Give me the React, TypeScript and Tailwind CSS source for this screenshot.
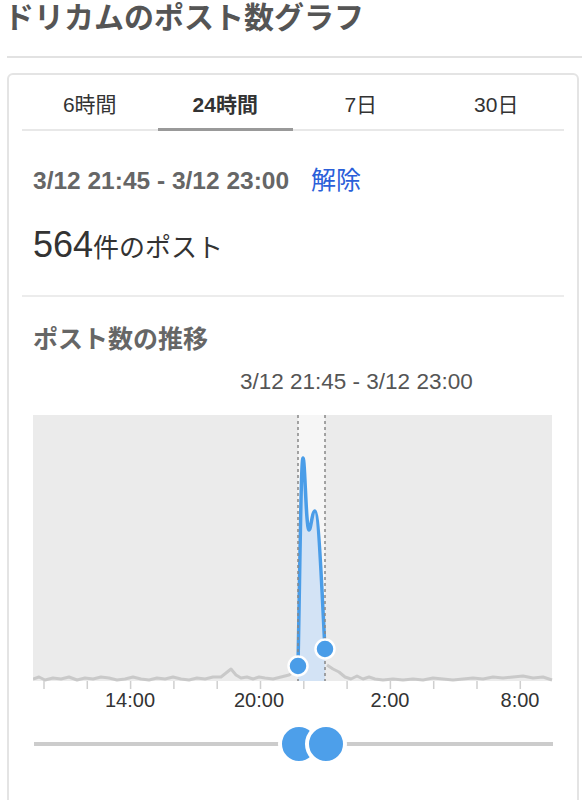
import React from "react";

const tabs = ["6時間", "24時間", "7日", "30日"];

// wiggly grey line, split around the selected range
const greyLeft: [number, number][] = [
  [0, 264], [6, 262], [12, 265], [20, 263], [28, 264], [36, 262], [44, 265],
  [52, 263], [60, 264], [68, 262], [76, 263], [84, 265], [92, 264], [100, 262],
  [108, 264], [116, 265], [124, 263], [132, 264], [140, 262], [148, 264],
  [156, 265], [164, 263], [172, 264], [180, 262], [188, 262], [193, 258],
  [198, 254], [203, 260], [208, 263], [214, 262], [220, 264], [226, 262],
  [232, 263], [240, 264], [248, 262], [256, 260], [262, 256], [265, 251],
];
const greyRight: [number, number][] = [
  [294, 250], [300, 254], [306, 257], [312, 262], [318, 264], [324, 261],
  [330, 264], [336, 262], [342, 264], [350, 265], [360, 264], [370, 265],
  [380, 264], [390, 265], [400, 263], [410, 264], [420, 265], [430, 264],
  [440, 263], [450, 264], [460, 262], [470, 263], [480, 262], [490, 261],
  [500, 263], [510, 262], [519, 265],
];

const toPoints = (pts: [number, number][]) => pts.map((p) => p.join(",")).join(" ");

const ticks = Array.from({ length: 12 }, (_, i) => 11 + i * 43.3);

const labels = [
  { x: 97, text: "14:00" },
  { x: 226, text: "20:00" },
  { x: 357, text: "2:00" },
  { x: 487, text: "8:00" },
];

const peak =
  "M265 251 C267 150 268 43 270 43 C272 43 273 115 276 115 C278 115 279 96 282 96 C286 96 290 200 292 234";

function PostChart() {
  return (
    <svg width="520" height="300" viewBox="0 0 520 300" className="ml-[11px] block">
      <rect x="0" y="0" width="519" height="266" fill="#ebebeb" />
      <rect x="265" y="0" width="27" height="266" fill="#f6f6f6" />
      <polyline points={toPoints(greyLeft)} fill="none" stroke="#c9c9c9" strokeWidth="3" strokeLinejoin="round" />
      <polyline points={toPoints(greyRight)} fill="none" stroke="#c9c9c9" strokeWidth="3" strokeLinejoin="round" />
      <path d={`${peak} L292 266 L265 266 Z`} fill="#d3e3f5" />
      <path d={peak} fill="none" stroke="#4a9de8" strokeWidth="3.5" strokeLinecap="round" />
      <line x1="265" y1="0" x2="265" y2="266" stroke="#888" strokeWidth="1.5" strokeDasharray="3 3" />
      <line x1="292" y1="0" x2="292" y2="266" stroke="#888" strokeWidth="1.5" strokeDasharray="3 3" />
      <circle cx="265" cy="251" r="9.5" fill="#4a9de8" stroke="#fff" strokeWidth="2.5" />
      <circle cx="292" cy="234" r="9.5" fill="#4a9de8" stroke="#fff" strokeWidth="2.5" />
      {ticks.map((x) => (
        <line key={x} x1={x} y1="266" x2={x} y2="274" stroke="#cfcfcf" strokeWidth="1.5" />
      ))}
      {labels.map((l) => (
        <text
          key={l.text}
          x={l.x}
          y="292"
          textAnchor="middle"
          fontSize="20"
          fill="#333"
          fontFamily="'Liberation Sans', sans-serif">
          {l.text}
        </text>
      ))}
    </svg>
  );
}

export default function App() {
  return (
    <div className="h-[800px] w-[585px] overflow-hidden bg-white font-['Liberation_Sans','Noto_Sans_CJK_JP',sans-serif]">
      <h1 className="h-[56px] pl-[4px] text-[30px] leading-[36px] font-bold text-[#555]">
        ドリカムのポスト数グラフ
      </h1>
      <div className="mx-[7px] h-[2px] w-[575px] bg-[#e2e2e2]" />

      <div className="mx-[7px] mt-[15px] w-[572px] rounded-[6px] border-2 border-[#e4e4e4] px-[13px] pb-[60px]">
        <div className="flex border-b-2 border-[#e8e8e8]">
          {tabs.map((t, i) => (
            <div
              key={t}
              className={`-mb-[2px] flex h-[56px] flex-1 items-center justify-center border-b-[3px] pt-[6px] text-[21px] text-[#333] ${
                i === 1 ? "border-[#999] font-bold" : "border-transparent"
              }`}>
              {t}
            </div>
          ))}
        </div>

        <div className="mt-[30px] flex h-[40px] items-center pl-[11px]">
          <span className="text-[24.5px] font-bold text-[#666]">3/12 21:45 - 3/12 23:00</span>
          <span className="ml-[22px] text-[25px] text-[#2b5fd9]">解除</span>
        </div>

        <div className="mt-[19px] flex h-[50px] items-baseline pl-[11px] text-[#333]">
          <span className="text-[36px] leading-[50px]">564</span>
          <span className="text-[26px]">件のポスト</span>
        </div>

        <div className="mt-[25px] h-[2px] bg-[#ececec]" />

        <h2 className="mt-[25px] flex h-[36px] items-center pl-[11px] text-[25px] font-bold text-[#666]">
          ポスト数の推移
        </h2>

        <div className="mt-[9px] flex h-[30px] items-center pl-[218px] text-[22.5px] text-[#555]">
          3/12 21:45 - 3/12 23:00
        </div>

        <div className="mt-[18px]">
          <PostChart />
        </div>

        <div className="relative mt-[7px] ml-[12px] flex h-[44px] w-[519px] items-center">
          <div className="h-[4px] w-full bg-[#cccccc]" />
          <div className="absolute top-[1px] left-[244px] h-[42px] w-[42px] rounded-full border-4 border-white bg-[#4d9fea]" />
          <div className="absolute top-[1px] left-[271px] h-[42px] w-[42px] rounded-full border-4 border-white bg-[#4d9fea]" />
        </div>
      </div>
    </div>
  );
}
